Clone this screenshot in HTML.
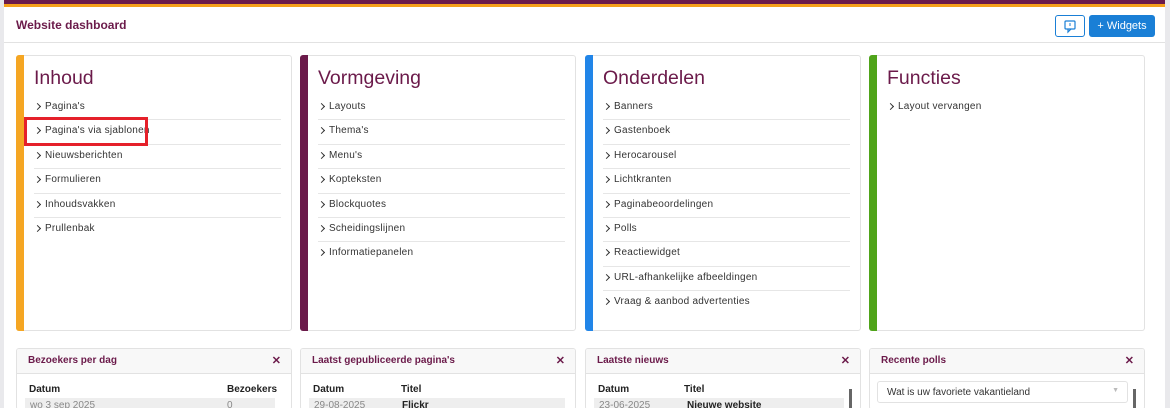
<!DOCTYPE html><html><head><style>
*{margin:0;padding:0;box-sizing:border-box}
html,body{width:1170px;height:408px;overflow:hidden}
body{background:#e9e9ec;font-family:"Liberation Sans",sans-serif;position:relative}
.main{position:absolute;left:4px;top:0;width:1161px;height:408px;background:#fff;border-top:4px solid #6b1a4a}
.stripe{position:absolute;left:4px;top:4px;width:1161px;height:3px;background:#f5a01a}
.hdr{position:absolute;left:4px;top:7px;width:1161px;height:36px;border-bottom:1px solid #e2e2e2}
.hdr h1{position:absolute;left:12px;top:11px;font-size:12px;font-weight:bold;color:#6b1a4a}
.b1{position:absolute;left:1051px;top:8px;width:30px;height:22px;border:1px solid #1a7fd6;border-radius:3px}
.b2{position:absolute;left:1085px;top:8px;width:66px;height:22px;background:#1a7fd6;border-radius:3px;color:#fff;font-size:11px;line-height:22px;text-align:center}
.card{position:absolute;top:55px;height:276px;width:276px;border:1px solid #e2e2e2;border-radius:3px;background:#fff}
.card .bar{position:absolute;left:-1px;top:-1px;bottom:-1px;width:8px;border-radius:3px 0 0 3px}
.card h2{position:absolute;left:17px;top:11px;font-size:19.5px;font-weight:normal;color:#6b1a4a}
.card ul{position:absolute;left:17px;top:40px;width:247px;list-style:none}
.card li{height:24.4px;line-height:21px;font-size:10px;letter-spacing:0.25px;color:#333;border-bottom:1px solid #e6e6e6;padding-left:11px;position:relative}
.card li:last-child{border-bottom:none}
.card li:before{content:"";position:absolute;left:1px;top:8px;width:4px;height:4px;border-right:1.2px solid #333;border-top:1.2px solid #333;transform:rotate(45deg)}
.w{position:absolute;top:348px;width:276px;height:62px;border:1px solid #e2e2e2;border-radius:3px;background:#fff;overflow:hidden}
.w .wh{height:25px;background:#f8f8f8;border-bottom:1px solid #e2e2e2;font-size:10px;font-weight:bold;color:#6b1a4a;padding:6px 0 0 11px;position:relative}
.w .x{position:absolute;right:10px;top:5px;font-size:11px}
.th{position:absolute;top:35px;font-size:10px;font-weight:bold;color:#222}
.row{position:absolute;top:49px;left:8px;height:20px;background:#eee;font-size:10px;color:#888;padding:2px 0 0 5px}
.sb{position:absolute;left:1165px;top:0;width:5px;height:408px;background:#e9e9ec}
</style></head><body>
<div class="main"></div><div class="stripe"></div>
<div class="hdr"><h1>Website dashboard</h1>
<div class="b1"><svg width="28" height="20" viewBox="0 0 28 20"><rect x="9" y="5" width="10" height="8" rx="1" fill="none" stroke="#1a7fd6" stroke-width="1.2"/><path d="M12 13l0 3 3-3" fill="none" stroke="#1a7fd6" stroke-width="1.2"/><path d="M14 7v3" stroke="#1a7fd6"/></svg></div>
<div class="b2">+ Widgets</div></div>

<div class="card" style="left:16px"><div class="bar" style="background:#f5a623"></div><h2>Inhoud</h2><ul><li>Pagina's</li><li>Pagina's via sjablonen</li><li>Nieuwsberichten</li><li>Formulieren</li><li>Inhoudsvakken</li><li>Prullenbak</li></ul>
<div style="position:absolute;left:7px;top:61px;width:124px;height:29px;border:3px solid #e5202a"></div></div>
<div class="card" style="left:300px"><div class="bar" style="background:#6b1a4a"></div><h2>Vormgeving</h2><ul><li>Layouts</li><li>Thema's</li><li>Menu's</li><li>Kopteksten</li><li>Blockquotes</li><li>Scheidingslijnen</li><li>Informatiepanelen</li></ul></div>
<div class="card" style="left:585px"><div class="bar" style="background:#2185e8"></div><h2>Onderdelen</h2><ul><li>Banners</li><li>Gastenboek</li><li>Herocarousel</li><li>Lichtkranten</li><li>Paginabeoordelingen</li><li>Polls</li><li>Reactiewidget</li><li>URL-afhankelijke afbeeldingen</li><li>Vraag &amp; aanbod advertenties</li></ul></div>
<div class="card" style="left:869px"><div class="bar" style="background:#4fa41a"></div><h2>Functies</h2><ul><li>Layout vervangen</li></ul></div>

<div class="w" style="left:16px"><div class="wh">Bezoekers per dag<span class="x">✕</span></div><div class="th" style="left:12px">Datum</div><div class="th" style="left:210px">Bezoekers</div><div class="row" style="width:250px">wo 3 sep 2025<span style="position:absolute;left:202px">0</span></div></div>
<div class="w" style="left:300px"><div class="wh">Laatst gepubliceerde pagina's<span class="x">✕</span></div><div class="th" style="left:12px">Datum</div><div class="th" style="left:100px">Titel</div><div class="row" style="width:256px">29-08-2025<b style="position:absolute;left:93px;color:#222">Flickr</b></div></div>
<div class="w" style="left:585px"><div class="wh">Laatste nieuws<span class="x">✕</span></div><div class="th" style="left:12px">Datum</div><div class="th" style="left:98px">Titel</div><div class="row" style="width:250px">23-06-2025<b style="position:absolute;left:93px;color:#222">Nieuwe website</b></div><div style="position:absolute;left:263px;top:40px;width:3px;height:30px;background:#666"></div></div>
<div class="w" style="left:869px"><div class="wh">Recente polls<span class="x">✕</span></div><div style="position:absolute;left:7px;top:32px;width:251px;height:22px;border:1px solid #e2e2e2;border-radius:3px;font-size:10px;color:#333;padding:5px 0 0 9px">Wat is uw favoriete vakantieland<span style="position:absolute;right:8px;top:5px;color:#bbb;font-size:7px">▼</span></div><div style="position:absolute;left:263px;top:40px;width:3px;height:30px;background:#666"></div></div>
<div class="sb"></div>
</body></html>
